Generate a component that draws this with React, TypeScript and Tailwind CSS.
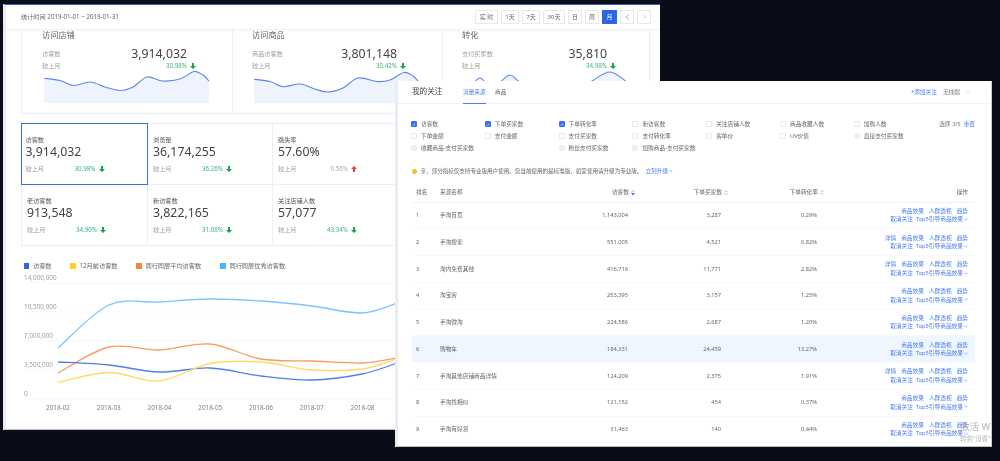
import React from "react";

type Pt = [number, number];

function smooth(pts: Pt[]): string {
  let d = `M${pts[0][0]} ${pts[0][1]}`;
  for (let i = 0; i < pts.length - 1; i++) {
    const p0 = pts[Math.max(i - 1, 0)];
    const p1 = pts[i];
    const p2 = pts[i + 1];
    const p3 = pts[Math.min(i + 2, pts.length - 1)];
    const c1x = p1[0] + (p2[0] - p0[0]) / 6;
    const c1y = p1[1] + (p2[1] - p0[1]) / 6;
    const c2x = p2[0] - (p3[0] - p1[0]) / 6;
    const c2y = p2[1] - (p3[1] - p1[1]) / 6;
    d += ` C${c1x} ${c1y} ${c2x} ${c2y} ${p2[0]} ${p2[1]}`;
  }
  return d;
}

function Arrow({ up = false }: { up?: boolean }) {
  return (
    <svg width="6" height="6" viewBox="0 0 6 6" className="shrink-0">
      <polygon
        points={up ? "3,0 6,3 4,3 4,6 2,6 2,3 0,3" : "2,0 4,0 4,3 6,3 3,6 0,3 2,3"}
        fill={up ? "#ee3a3a" : "#16a34a"}
      />
    </svg>
  );
}

function Spark({ pts }: { pts: Pt[] }) {
  const line = smooth(pts);
  const last = pts[pts.length - 1][0];
  return (
    <svg width="170" height="32" viewBox="0 0 170 32" className="block">
      <path d={`${line} L${last} 32 L${pts[0][0]} 32 Z`} fill="#eef3fd" />
      <path d={line} fill="none" stroke="#5b87ec" strokeWidth="1.1" />
    </svg>
  );
}

const cards: { title: string; label: string; value: string; pct: string; pts: Pt[] }[] = [
  {
    title: "访问店铺",
    label: "访客数",
    value: "3,914,032",
    pct: "30.98%",
    pts: [[0, 7.3], [16, 9.5], [30, 14.5], [46, 11], [61, 16], [76, 19.5], [89, 16], [103, 6], [118, 10], [136, 8], [150, 0.5], [159, 4], [165, 10]],
  },
  {
    title: "访问商品",
    label: "商品访客数",
    value: "3,801,148",
    pct: "30.42%",
    pts: [[0, 8.3], [16, 10.5], [29, 15.7], [46, 13], [61, 18], [74, 21], [89, 17], [104, 7], [123, 10.5], [136, 9], [150, 1.5], [159, 5], [165, 11]],
  },
  {
    title: "转化",
    label: "支付买家数",
    value: "35,810",
    pct: "34.98%",
    pts: [[0, 19], [8, 14], [16, 7], [26, 15], [36, 11], [46, 4], [56, 11], [81, 24], [111, 21], [128, 10], [146, 1], [163, 11]],
  },
];

const metrics: { label: string; value: string; pct: string; up?: boolean }[] = [
  { label: "访客数", value: "3,914,032", pct: "30.98%" },
  { label: "浏览量", value: "36,174,255", pct: "36.26%" },
  { label: "跳失率", value: "57.60%", pct: "0.56%", up: true },
  { label: "老访客数", value: "913,548", pct: "34.90%" },
  { label: "新访客数", value: "3,822,165", pct: "31.08%" },
  { label: "关注店铺人数", value: "57,077", pct: "43.34%" },
];

const legend = [
  { c: "bg-[#2f66e8]", t: "访客数", w: "w-[37px]" },
  { c: "bg-[#f8d225]", t: "12月前访客数", w: "w-[56.5px]" },
  { c: "bg-[#fb8438]", t: "同行同层平均访客数", w: "w-[74.5px]" },
  { c: "bg-[#4db5ff]", t: "同行同层优秀访客数", w: "w-[70px]" },
];

const series: { c: string; pts: Pt[] }[] = [
  { c: "#7cc4ff", pts: [[58, 348], [109, 305], [159, 302], [210, 299], [261, 301], [312, 306], [362, 313], [397, 303]] },
  { c: "#fb9a63", pts: [[58, 373], [109, 347], [159, 350], [210, 344], [261, 359], [312, 361], [362, 363], [397, 358]] },
  { c: "#4f7fee", pts: [[58, 362], [109, 365], [159, 372], [210, 368], [261, 376], [312, 380], [362, 374], [397, 363]] },
  { c: "#fbdc60", pts: [[58, 382.5], [109, 372.5], [159, 381], [210, 363.5], [261, 362], [312, 370], [362, 369], [397, 359]] },
];

const yAxis: [string, number][] = [["14,000,000", 283], ["10,500,000", 312], ["7,000,000", 341], ["3,500,000", 370], ["0", 399]];
const xAxis = ["2018-02", "2018-03", "2018-04", "2018-05", "2018-06", "2018-07", "2018-08"];

const buttons = [
  { t: "实 时", w: "w-[23px]" },
  { t: "1天", w: "w-[18px]" },
  { t: "7天", w: "w-[18px]" },
  { t: "30天", w: "w-[22px]" },
  { t: "日", w: "w-[14px]" },
  { t: "周", w: "w-[14px]" },
];

const checks: { t: string; s?: "on" | "off" | "dis" | "none" }[] = [
  { t: "访客数", s: "on" }, { t: "下单买家数", s: "on" }, { t: "下单转化率", s: "on" }, { t: "新访客数" }, { t: "关注店铺人数" }, { t: "商品收藏人数" }, { t: "加购人数" },
  { t: "下单金额" }, { t: "支付金额" }, { t: "支付买家数" }, { t: "支付转化率" }, { t: "客单价" }, { t: "UV价值" }, { t: "直接支付买家数", s: "dis" },
  { t: "收藏商品-支付买家数", s: "dis" }, { t: "", s: "none" }, { t: "粉丝支付买家数", s: "dis" }, { t: "加购商品-支付买家数", s: "dis" },
];

const rows = [
  ["1", "手淘首页", "1,143,004", "3,287", "0.29%", false],
  ["2", "手淘搜索", "551,005", "4,521", "0.82%", true],
  ["3", "淘内免费其他", "416,716", "11,771", "2.82%", true],
  ["4", "淘宝客", "253,395", "3,157", "1.25%", false],
  ["5", "手淘微淘", "224,586", "2,687", "1.20%", false],
  ["6", "购物车", "184,331", "24,459", "13.27%", false],
  ["7", "手淘其他店铺商品详情", "124,209", "2,375", "1.91%", true],
  ["8", "手淘找相似", "121,152", "454", "0.37%", false],
  ["9", "手淘有好货", "31,463", "140", "0.44%", false],
] as const;

const cols = "grid grid-cols-[28px_120px_78px_93px_96px_148px] w-[563px]";

function Sort({ active = false }: { active?: boolean }) {
  return (
    <svg width="6" height="7" viewBox="0 0 6 7" className="shrink-0">
      <polygon points="3,0.5 5,3 1,3" fill={active ? "#c9d6f5" : "#d5dbe6"} />
      <polygon points="3,6.5 5,4 1,4" fill={active ? "#3a6ff0" : "#d5dbe6"} />
    </svg>
  );
}

export default function App() {
  return (
    <div className="relative w-[1000px] h-[461px] overflow-hidden bg-[#0a0c17] [font-family:'Noto_Sans','Noto_Sans_CJK_SC',sans-serif] blur-[0.35px]">
      {/* back window */}
      <div className="absolute left-[3px] top-[4px] w-[657px] h-[426px] overflow-hidden bg-white border-t-[1.5px] border-t-[#2b5fc7] border-l-[3px] border-l-[#e8edf4] border-b border-b-[#b9bdc6]">
        <div className="h-[25px] flex items-center justify-between pl-[15px] pr-[9px] border-b border-[#f0f2f6] shadow-[0_1px_2px_rgba(0,0,0,0.04)] relative z-10 bg-white">
          <span className="text-[6.2px] text-[#666]">统计时间 2019-01-01 ~ 2019-01-31</span>
          <div className="flex items-center gap-[3px]">
            {buttons.map((b) => (
              <span key={b.t} className={`${b.w} h-[14px] flex items-center justify-center border border-[#e6e8ec] text-[6px] text-[#666]`}>
                {b.t}
              </span>
            ))}
            <span className="w-[15px] h-[14px] flex items-center justify-center bg-[#2f66e0] text-[6px] text-white">月</span>
            <span className="w-[14px] h-[14px] flex items-center justify-center border border-[#e6e8ec]">
              <svg width="5" height="6" viewBox="0 0 5 6"><path d="M3.5 0.7 L1.2 3 L3.5 5.3" fill="none" stroke="#888" strokeWidth="0.8" /></svg>
            </span>
            <span className="w-[14px] h-[14px] flex items-center justify-center border border-[#e6e8ec]">
              <svg width="5" height="6" viewBox="0 0 5 6"><path d="M1.5 0.7 L3.8 3 L1.5 5.3" fill="none" stroke="#ccc" strokeWidth="0.8" /></svg>
            </span>
          </div>
        </div>

        <div className="ml-[15px] w-[629px] h-[84px] grid grid-cols-[210px_210px_207px] border-l border-b border-r border-[#eaeff6]">
          {cards.map((c, i) => (
            <div key={c.title} className={i > 0 ? "pl-[19px] border-l border-[#eaeff6]" : "pl-[20px]"}>
              <div className="h-[10px] leading-[10px] text-[8.2px] text-[#666]">{c.title}</div>
              <div className="mt-[9px] w-[145px] h-[10px] flex items-center justify-between">
                <span className="text-[6.2px] text-[#a0a0a0]">{c.label}</span>
                <span className="text-[12.3px] text-[#444]">{c.value}</span>
              </div>
              <div className="mt-[2px] w-[154px] h-[10px] flex items-center justify-between">
                <span className="text-[6.2px] text-[#a0a0a0]">较上月</span>
                <span className="flex items-center gap-[3px] text-[6.2px] text-[#35b878]">
                  {c.pct}
                  <Arrow />
                </span>
              </div>
              <div className="ml-[2px]">
                <Spark pts={c.pts} />
              </div>
            </div>
          ))}
        </div>

        <div className="mt-[9px] ml-[15px] w-[378px] grid grid-cols-[127px_125px_126px] grid-rows-[62px_61px] relative">
          {metrics.map((m, i) => (
            <div
              key={m.label}
              className={`pt-[10.5px] ${i === 0 ? "pl-[3.5px] border-[1.5px] border-[#3a6fe0]" : "pl-[5px] border-r border-b border-[#eaeff6]"} ${i === 3 ? "border-l" : ""} ${i > 0 && i < 3 ? "border-t" : ""}`}
            >
              <div className="h-[9px] leading-[9px] text-[6.2px] text-[#555]">{m.label}</div>
              <div className="h-[16px] leading-[16px] text-[12.3px] text-[#444]">{m.value}</div>
              <div className="mt-[4.5px] w-[79px] flex items-center justify-between text-[6.2px]">
                <span className="text-[#a0a0a0]">较上月</span>
                <span className={`flex items-center gap-[3px] ${m.up ? "text-[#aaa]" : "text-[#35b878]"}`}>
                  {m.pct}
                  <Arrow up={m.up} />
                </span>
              </div>
            </div>
          ))}
        </div>

        <div className="mt-[16px] ml-[17.5px] flex items-center text-[6.2px] text-[#666] h-[8px]">
          {legend.map((l) => (
            <div key={l.t} className="flex items-center">
              <span className={`w-[5.5px] h-[5.5px] mr-[4px] ${l.c}`} />
              <span className={`${l.w} whitespace-nowrap`}>{l.t}</span>
            </div>
          ))}
        </div>

        <svg width="654" height="142" viewBox="6 270 654 142" className="block">
          {yAxis.map(([t, y]) => (
            <g key={t}>
              <line x1="24" x2="660" y1={y} y2={y} stroke="#f6f7f9" strokeWidth="1" />
              <text x="24" y={y - 3} fontSize="6.4" fill="#a0a0a0">{t}</text>
            </g>
          ))}
          {xAxis.map((t, i) => (
            <text key={t} x={58 + i * 50.75} y="409.5" fontSize="6.4" fill="#808080" textAnchor="middle">{t}</text>
          ))}
          {series.map((s) => (
            <path key={s.c} d={smooth(s.pts)} fill="none" stroke={s.c} strokeWidth="1.3" />
          ))}
        </svg>
      </div>

      {/* front window */}
      <div className="absolute left-[395px] top-[81px] w-[597px] h-[365.5px] overflow-hidden bg-white border-l-[3px] border-l-[#e8edf4] border-r border-r-[#c9ccd3] border-b border-b-[#b9bdc6]">
        <div className="h-[23px] pl-[14px] pr-[21px] flex items-center justify-between border-b border-[#eff1f5]">
          <div className="flex items-center h-full">
            <span className="w-[51px] text-[7.6px] text-[#444]">我的关注</span>
            <span className="h-full w-[32px] flex items-center text-[5.7px] text-[#4a7cf0] relative">
              流量来源
              <span className="absolute left-0 bottom-[-1px] w-[23px] h-[1px] bg-[#4a7cf0]" />
            </span>
            <span className="text-[5.7px] text-[#666]">商品</span>
          </div>
          <div className="flex items-center text-[5.7px]">
            <span className="text-[#4a7cf0] mr-[6px]">+添加关注</span>
            <span className="text-[#777] mr-[6px]">无线端</span>
            <svg width="4" height="3" viewBox="0 0 4 3"><path d="M0.3 0.5 L2 2.3 L3.7 0.5" fill="none" stroke="#bbb" strokeWidth="0.5" /></svg>
          </div>
        </div>

        <div className="mt-[14px] ml-[13px] w-[564px] flex justify-between text-[5.7px]">
          <div className="grid grid-cols-[repeat(7,73.8px)] auto-rows-[12.2px]">
            {checks.map((c, i) => (
              <div key={i} className="flex items-center text-[#666] whitespace-nowrap">
                {c.s !== "none" && (
                  <span
                    className={`w-[6px] h-[6px] mr-[4px] flex items-center justify-center rounded-[1px] border ${
                      c.s === "on" ? "bg-[#3a6ff0] border-[#3a6ff0]" : c.s === "dis" ? "bg-[#eeeeee] border-[#eeeeee]" : "bg-white border-[#e8e8e8]"
                    }`}
                  >
                    {c.s === "on" && (
                      <svg width="5" height="5" viewBox="0 0 5 5"><path d="M1 2.5 L2.1 3.6 L4 1.4" fill="none" stroke="white" strokeWidth="0.8" /></svg>
                    )}
                  </span>
                )}
                {c.t}
              </div>
            ))}
          </div>
          <div className="h-[12.2px] flex items-center gap-[3px] text-[#777]">
            <span>选择 3/5</span>
            <span className="text-[#4a7cf0]">重置</span>
          </div>
        </div>

        <div className="mt-[12px] ml-[13.5px] h-[10px] flex items-center text-[5.55px] text-[#666]">
          <span className="w-[5px] h-[5px] rounded-full bg-[#f7c325] mr-[4px]" />
          <span>亲，部分指标仅支持专业版用户使用。您当前使用的是标准版，如需使用请升级为专业版。</span>
          <span className="text-[#4a7cf0] ml-[3px] text-[5.7px]">立刻升级 &gt;</span>
        </div>

        <div className="mt-[7px] ml-[14px]">
          <div className={`${cols} h-[19px] items-center text-[5.7px] text-[#666] border-b border-[#f0f2f5]`}>
            <span className="pl-[4px]">排名</span>
            <span>来源名称</span>
            <span className="flex justify-end items-center gap-[1px] pr-[2px]">访客数<Sort active /></span>
            <span className="flex justify-end items-center gap-[1px] pr-[2px]">下单买家数<Sort /></span>
            <span className="flex justify-end items-center gap-[1px] pr-[2px]">下单转化率<Sort /></span>
            <span className="pr-[7px] text-right">操作</span>
          </div>
          {rows.map((r) => (
            <div
              key={r[0]}
              className={`${cols} h-[26.75px] items-center text-[5.7px] text-[#666] border-b border-[#f7f8fa] ${r[0] === "6" ? "bg-[#eff6ff]" : ""}`}
            >
              <span className="pl-[4px]">{r[0]}</span>
              <span>{r[1]}</span>
              <span className="pr-[10px] text-right">{r[2]}</span>
              <span className="pr-[10px] text-right">{r[3]}</span>
              <span className="pr-[10px] text-right">{r[4]}</span>
              <div className="pr-[7px] flex flex-col items-end text-[#4a7cf0] leading-[8.6px]">
                <div className="flex gap-[5px]">
                  {r[5] && <span>详情</span>}
                  <span>商品效果</span>
                  <span>人群透视</span>
                  <span>趋势</span>
                </div>
                <div className="flex items-center gap-[3px]">
                  <span>取消关注</span>
                  <span className="flex items-center gap-[1px]">
                    Top5引导商品效果
                    <svg width="4" height="3" viewBox="0 0 4 3"><path d="M0.3 0.5 L2 2.3 L3.7 0.5" fill="none" stroke="#4a7cf0" strokeWidth="0.5" /></svg>
                  </span>
                </div>
              </div>
            </div>
          ))}
        </div>
      </div>

      {/* activation watermark */}
      <div className="absolute left-[960px] top-[420px] w-[32px] overflow-hidden whitespace-nowrap text-[#9a9a9a]/70">
        <div className="text-[9.5px] leading-[13px]">激活 W</div>
        <div className="text-[6.4px] leading-[9px] mt-[1px]">转到"设置"</div>
      </div>
    </div>
  );
}
